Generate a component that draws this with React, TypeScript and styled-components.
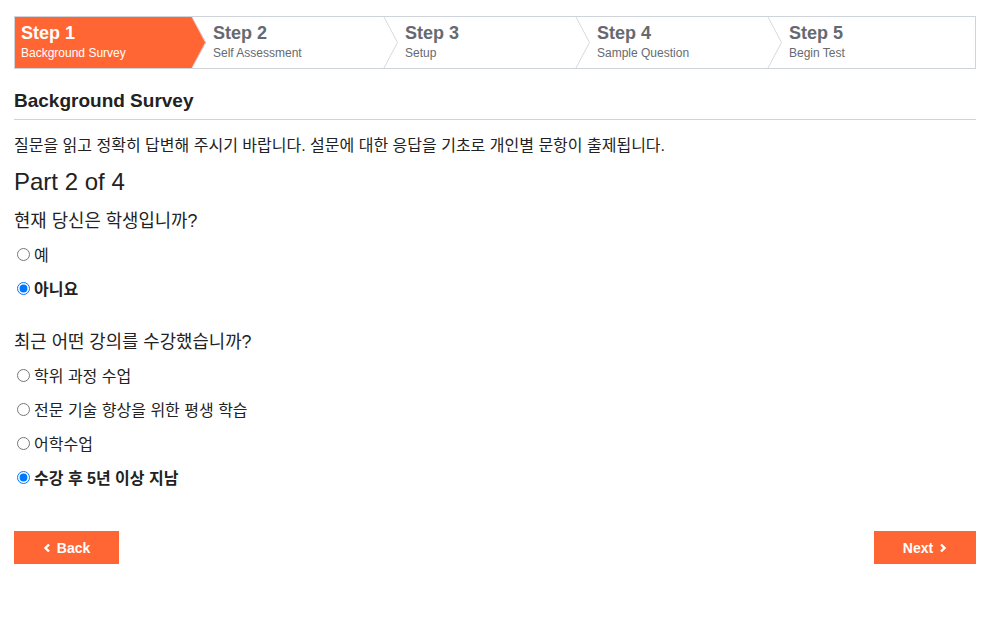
import React from "react";
import styled, { createGlobalStyle, css } from "styled-components";

const Global = createGlobalStyle`
  html, body { margin: 0; padding: 0; background: #fff; }
  body { font-family: "Liberation Sans", Arial, "Noto Sans CJK KR", sans-serif; color: #222; }
`;

const ORANGE = "#ff6633";

const Page = styled.div`
  width: 962px;
  margin: 16px 0 0 14px;
`;

const Stepper = styled.div`
  display: flex;
  height: 51px;
  border: 1px solid #cfd3da;
`;

const StepItem = styled.div<{ $active?: boolean }>`
  position: relative;
  flex: 1;
  padding: 5px 0 0 6px;
  box-sizing: border-box;
  color: #666a70;
  ${(p) =>
    p.$active &&
    css`
      color: #fff;
      &::before {
        content: "";
        position: absolute;
        inset: 0;
        background: ${ORANGE};
        clip-path: polygon(0 0, calc(100% - 15px) 0, calc(100% - 1px) 50%, calc(100% - 15px) 100%, 0 100%);
      }
    `}
`;

const StepText = styled.div`
  position: relative;
`;

const StepTitle = styled.div`
  font-size: 18px;
  font-weight: bold;
  line-height: 22px;
`;

const StepSub = styled.div`
  font-size: 12px;
  line-height: 16px;
  margin-top: 1px;
`;

const Chevron = styled.svg`
  position: absolute;
  right: 0;
  top: 0;
  width: 16px;
  height: 51px;
`;

const Heading = styled.h2`
  margin: 19px 0 0;
  font-size: 19px;
  font-weight: bold;
  line-height: 26px;
  padding-bottom: 5px;
  border-bottom: 1px solid #cfd3da;
  color: #222;
`;

const Desc = styled.p`
  margin: 16px 0 0;
  font-size: 16px;
  line-height: 20px;
`;

const Part = styled.div`
  margin-top: 12px;
  font-size: 24px;
  line-height: 28px;
`;

const Question = styled.div<{ $gap: number }>`
  margin-top: ${(p) => p.$gap}px;
  font-size: 17.8px;
  line-height: 24px;
  margin-bottom: 4px;
`;

const Option = styled.label<{ $checked?: boolean }>`
  display: flex;
  align-items: center;
  height: 34px;
  font-size: 16px;
  font-weight: ${(p) => (p.$checked ? "bold" : "normal")};
  cursor: pointer;
`;

const Radio = styled.input`
  margin: 0 4px 0 3px;
  width: 13px;
  height: 13px;
`;

const Footer = styled.div`
  display: flex;
  justify-content: space-between;
  margin-top: 37px;
`;

const Button = styled.button<{ $w: number }>`
  display: flex;
  align-items: center;
  justify-content: center;
  gap: 6px;
  width: ${(p) => p.$w}px;
  height: 33px;
  border: none;
  background: ${ORANGE};
  color: #fff;
  font-family: inherit;
  font-size: 14px;
  font-weight: bold;
  box-shadow: 0 2px 0 #d9d9d9;
  cursor: pointer;
  padding: 0;
`;

const steps = [
  ["Step 1", "Background Survey"],
  ["Step 2", "Self Assessment"],
  ["Step 3", "Setup"],
  ["Step 4", "Sample Question"],
  ["Step 5", "Begin Test"],
];

const ChevronLeft = () => (
  <svg width="8" height="10" viewBox="0 0 8 10">
    <path d="M6 1.5 L2.5 5 L6 8.5" stroke="#fff" strokeWidth="2.4" fill="none" />
  </svg>
);
const ChevronRight = () => (
  <svg width="8" height="10" viewBox="0 0 8 10">
    <path d="M2 1.5 L5.5 5 L2 8.5" stroke="#fff" strokeWidth="2.4" fill="none" />
  </svg>
);

const q1 = [
  ["예", false],
  ["아니요", true],
] as const;
const q2 = [
  ["학위 과정 수업", false],
  ["전문 기술 향상을 위한 평생 학습", false],
  ["어학수업", false],
  ["수강 후 5년 이상 지남", true],
] as const;

export default function App() {
  return (
    <>
      <Global />
      <Page>
        <Stepper>
          {steps.map(([t, s], i) => (
            <StepItem key={t} $active={i === 0}>
              <StepText>
                <StepTitle>{t}</StepTitle>
                <StepSub>{s}</StepSub>
              </StepText>
              {i < steps.length - 1 && (
                <Chevron viewBox="0 0 16 51" preserveAspectRatio="none">
                  <path d="M1 0 L14.5 25.5 L1 51" stroke="#d6d9de" strokeWidth="1" fill="none" />
                </Chevron>
              )}
            </StepItem>
          ))}
        </Stepper>

        <Heading>Background Survey</Heading>
        <Desc>질문을 읽고 정확히 답변해 주시기 바랍니다. 설문에 대한 응답을 기초로 개인별 문항이 출제됩니다.</Desc>
        <Part>Part 2 of 4</Part>

        <Question $gap={13}>현재 당신은 학생입니까?</Question>
        {q1.map(([l, c]) => (
          <Option key={l} $checked={c}>
            <Radio type="radio" name="q1" defaultChecked={c} />
            {l}
          </Option>
        ))}

        <Question $gap={25}>최근 어떤 강의를 수강했습니까?</Question>
        {q2.map(([l, c]) => (
          <Option key={l} $checked={c}>
            <Radio type="radio" name="q2" defaultChecked={c} />
            {l}
          </Option>
        ))}

        <Footer>
          <Button $w={105}>
            <ChevronLeft />
            Back
          </Button>
          <Button $w={102}>
            Next
            <ChevronRight />
          </Button>
        </Footer>
      </Page>
    </>
  );
}
